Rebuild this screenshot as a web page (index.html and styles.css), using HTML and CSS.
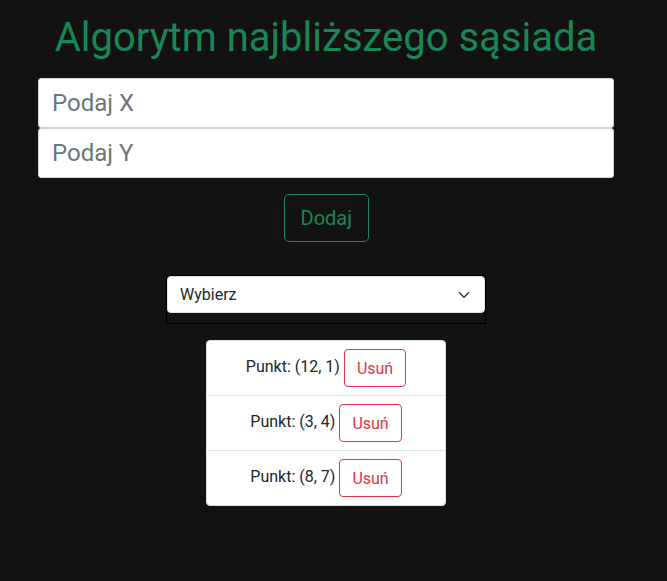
FILE: index.html
```html
<!DOCTYPE html>
<html lang="pl">
<head>
<meta charset="utf-8">
<title>Algorytm najbliższego sąsiada</title>
<link rel="stylesheet" href="styles.css">
</head>
<body>
<div class="page">
  <main class="app">
    <h1 class="title">Algorytm najbliższego sąsiada</h1>
    <div class="inputs">
      <input class="field" type="text" placeholder="Podaj X">
      <input class="field" type="text" placeholder="Podaj Y">
    </div>
    <div class="actions">
      <button class="btn-add" type="button">Dodaj</button>
    </div>
    <div class="select-wrap">
      <div class="select-box">
        <select class="select">
          <option>Wybierz</option>
        </select>
      </div>
    </div>
    <ul class="points">
      <li class="point">Punkt: (12, 1) <button class="btn-del" type="button">Usuń</button></li>
      <li class="point">Punkt: (3, 4) <button class="btn-del" type="button">Usuń</button></li>
      <li class="point">Punkt: (8, 7) <button class="btn-del" type="button">Usuń</button></li>
    </ul>
  </main>
</div>
</body>
</html>
```
FILE: styles.css
```css
* { box-sizing: border-box; }
html, body { margin: 0; padding: 0; }
body {
  background: #121212;
  font-family: Roboto, "Liberation Sans", sans-serif;
  color: #212529;
  min-height: 581px;
}
.page { width: 652px; }
.app {
  width: 576px;
  margin: 0 auto;
  display: flex;
  flex-direction: column;
}
.title {
  margin: 14px 0 16px;
  font-size: 40px;
  line-height: 48px;
  font-weight: 400;
  color: #198754;
  text-align: center;
}
.inputs { display: flex; flex-direction: column; }
.field {
  display: block;
  width: 100%;
  height: 50px;
  padding: 0 13px;
  font-family: Roboto, sans-serif;
  font-size: 24px;
  color: #212529;
  background: #fff;
  border: 1px solid #ced4da;
  border-radius: 3px;
  outline: none;
}
.field::placeholder { color: #6c757d; }
.actions {
  display: flex;
  justify-content: center;
  margin-top: 16px;
}
.btn-add {
  width: 85px;
  height: 48px;
  padding: 0 16px;
  font-family: Roboto, sans-serif;
  font-size: 20px;
  color: #198754;
  background: transparent;
  border: 1px solid #198754;
  border-radius: 5px;
}
.select-wrap {
  display: flex;
  justify-content: center;
  margin-top: 33px;
}
.select-box {
  width: 320px;
  height: 49px;
  background: transparent;
  border: 1px solid #000;
}
.select {
  display: block;
  width: 318px;
  height: 37px;
  padding: 0 36px 0 12px;
  font-family: Roboto, sans-serif;
  font-size: 16px;
  color: #212529;
  background-color: #fff;
  background-image: url("data:image/svg+xml,%3csvg xmlns='http://www.w3.org/2000/svg' viewBox='0 0 16 16'%3e%3cpath fill='none' stroke='%23343a40' stroke-linecap='round' stroke-linejoin='round' stroke-width='2' d='m2 5 6 6 6-6'/%3e%3c/svg%3e");
  background-repeat: no-repeat;
  background-position: right 12px center;
  background-size: 16px 12px;
  border: 1px solid #dee2e6;
  border-radius: 4px;
  appearance: none;
  -webkit-appearance: none;
  outline: none;
}
.points {
  list-style: none;
  margin: 16px auto 0;
  padding: 0;
  width: 240px;
  background: #fff;
  border: 1px solid #dee2e6;
  border-radius: 4px;
}
.point {
  padding: 8px 16px;
  font-size: 16px;
  line-height: 24px;
  text-align: center;
  color: #212529;
  border-top: 1px solid #dee2e6;
}
.point:first-child { border-top: 0; }
.btn-del {
  height: 38px;
  padding: 0 12px;
  font-family: Roboto, sans-serif;
  font-size: 16px;
  color: #dc3545;
  background: transparent;
  border: 1px solid #dc3545;
  border-radius: 4px;
  vertical-align: middle;
}
```
